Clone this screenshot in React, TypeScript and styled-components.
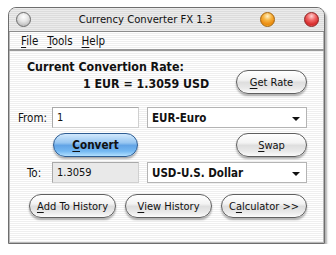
import React from "react";
import styled, { createGlobalStyle } from "styled-components";

const Global = createGlobalStyle`
  html, body { margin: 0; padding: 0; background: #ffffff; }
  body { font-family: "DejaVu Sans Condensed", "DejaVu Sans", sans-serif; }
`;

const FONT = `"DejaVu Sans Condensed", "DejaVu Sans", sans-serif`;

const Window = styled.div`
  box-sizing: border-box;
  margin: 7px 0 0 8px;
  width: 317px;
  height: 237px;
  border: 1px solid #6e6e6e;
  border-radius: 8px 8px 0 0;
  box-shadow: 2px 3px 2px rgba(0, 0, 0, 0.3), inset 1px 0 0 #b8b8b8, inset -1px 0 0 #b8b8b8, inset 0 -1px 0 #b8b8b8;
  display: flex;
  flex-direction: column;
  overflow: hidden;
  background: repeating-linear-gradient(to bottom, #ffffff 0px, #ffffff 1px, #efefef 1px, #efefef 2px);
`;

const TitleBar = styled.div`
  height: 23px;
  border-bottom: 1px solid #8c8c8c;
  background: repeating-linear-gradient(to bottom, #ebebeb 0px, #ebebeb 1px, #dcdcdc 1px, #dcdcdc 2px);
  display: flex;
  align-items: center;
  padding: 0 5px 0 7px;
  font-family: ${FONT};
  font-size: 11.2px;
  color: #111;
`;

const Light = styled.span<{ $kind: "clear" | "amber" | "red" }>`
  width: 15px;
  height: 15px;
  border-radius: 50%;
  box-sizing: border-box;
  flex: none;
  border: 1px solid
    ${(p) => (p.$kind === "clear" ? "#6a6a6a" : p.$kind === "amber" ? "#a4620c" : "#8a2020")};
  background: ${(p) =>
    p.$kind === "clear"
      ? "radial-gradient(circle at 50% 30%, #ffffff 0%, #e6e6e6 40%, #bdbdbd 80%, #d8d8d8 100%)"
      : p.$kind === "amber"
      ? "radial-gradient(circle at 50% 25%, #fff1c8 0%, #f7b542 35%, #ea8a10 70%, #f8d94a 100%)"
      : "radial-gradient(circle at 50% 25%, #ffd2d2 0%, #f26a6a 35%, #d62a2a 70%, #f57b7b 100%)"};
`;

const Title = styled.div`
  flex: 1;
  text-align: center;
`;

const Lights = styled.div`
  display: flex;
  gap: 29px;
`;

const MenuBar = styled.div`
  height: 17px;
  border-bottom: 2px solid #9a9a9a;
  display: flex;
  align-items: center;
  gap: 9px;
  padding: 0 0 0 12px;
  font-family: ${FONT};
  font-size: 11.5px;
  color: #111;
`;

const U = styled.span`
  text-decoration: underline;
  text-underline-offset: 2px;
`;

const Content = styled.div`
  flex: 1;
  padding: 8px 17px 0 0;
  display: flex;
  flex-direction: column;
  font-family: ${FONT};
  color: #111;
`;

const Header = styled.div`
  display: flex;
  justify-content: space-between;
  align-items: flex-start;
  padding-left: 18px;
`;

const RateText = styled.div`
  font-weight: bold;
  font-size: 12.3px;
  line-height: 17px;
`;

const RateValue = styled.div`
  padding-left: 56px;
`;

const Form = styled.div`
  display: grid;
  grid-template-columns: 35px 87px 160px;
  column-gap: 8px;
  grid-template-rows: 21px 24px 21px;
  row-gap: 5px;
  margin-top: 13px;
  font-size: 11.5px;
`;

const Label = styled.div<{ $indent: number }>`
  padding-left: ${(p) => p.$indent}px;
  display: flex;
  align-items: center;
`;

const Input = styled.div<{ $disabled?: boolean }>`
  box-sizing: border-box;
  border: 1px solid #a9a9a9;
  border-right-color: #d0d0d0;
  border-bottom-color: #d0d0d0;
  background: ${(p) => (p.$disabled ? "#e9e9e9" : "#ffffff")};
  display: flex;
  align-items: center;
  padding-left: 4px;
  font-size: 11px;
`;

const Select = styled.div`
  box-sizing: border-box;
  border: 1px solid #b4b4b4;
  background: #ffffff;
  display: flex;
  align-items: center;
  justify-content: space-between;
  padding: 0 6px 0 4px;
  font-weight: bold;
  font-size: 11.5px;
`;

const Arrow = styled.span`
  width: 0;
  height: 0;
  border-left: 4px solid transparent;
  border-right: 4px solid transparent;
  border-top: 4px solid #111;
  margin-top: 2px;
`;

const AquaButton = styled.div<{ $blue?: boolean; $w: number }>`
  box-sizing: border-box;
  width: ${(p) => p.$w}px;
  height: 24px;
  border-radius: 12px;
  border: 1px solid ${(p) => (p.$blue ? "#2e5d93" : "#5f5f5f")};
  background: ${(p) =>
    p.$blue
      ? "linear-gradient(to bottom, #d2e9fd 0%, #97c6f1 40%, #62a4e6 52%, #74b8f2 78%, #b2e0ff 100%)"
      : "linear-gradient(to bottom, #ffffff 0%, #f3f3f3 40%, #dedede 52%, #e9e9e9 78%, #fbfbfb 100%)"};
  box-shadow: 0 2px 2px rgba(0, 0, 0, 0.3);
  display: flex;
  align-items: center;
  justify-content: center;
  font-size: ${(p) => (p.$blue ? "11.6px" : "11px")};
  font-weight: ${(p) => (p.$blue ? "bold" : "normal")};
  color: #111;
`;

const ButtonCell = styled.div<{ $end?: boolean }>`
  display: flex;
  justify-content: ${(p) => (p.$end ? "flex-end" : "center")};
`;

const BottomRow = styled.div`
  display: flex;
  gap: 9px;
  margin: 11px 0 0 20px;
`;

const HeaderButton = styled.div`
  margin-top: 11px;
`;

export default function App() {
  return (
    <>
      <Global />
      <Window>
        <TitleBar>
          <Light $kind="clear" />
          <Title>Currency Converter FX 1.3</Title>
          <Lights>
            <Light $kind="amber" />
            <Light $kind="red" />
          </Lights>
        </TitleBar>
        <MenuBar>
          <span>
            <U>F</U>ile
          </span>
          <span>
            <U>T</U>ools
          </span>
          <span>
            <U>H</U>elp
          </span>
        </MenuBar>
        <Content>
          <Header>
            <RateText>
              <div>Current Convertion Rate:</div>
              <RateValue>1 EUR = 1.3059 USD</RateValue>
            </RateText>
            <HeaderButton>
              <AquaButton $w={71}>
                <U>G</U>et Rate
              </AquaButton>
            </HeaderButton>
          </Header>
          <Form>
            <Label $indent={9}>From:</Label>
            <Input>1</Input>
            <Select>
              <span>EUR-Euro</span>
              <Arrow />
            </Select>

            <div />
            <ButtonCell>
              <AquaButton $blue $w={85}>
                <U>C</U>onvert
              </AquaButton>
            </ButtonCell>
            <ButtonCell $end>
              <AquaButton $w={71}>
                <U>S</U>wap
              </AquaButton>
            </ButtonCell>

            <Label $indent={18}>To:</Label>
            <Input $disabled>1.3059</Input>
            <Select>
              <span>USD-U.S. Dollar</span>
              <Arrow />
            </Select>
          </Form>
          <BottomRow>
            <AquaButton $w={87}>
              <U>A</U>dd To History
            </AquaButton>
            <AquaButton $w={87}>
              <U>V</U>iew History
            </AquaButton>
            <AquaButton $w={86}>
              C<U>a</U>lculator &gt;&gt;
            </AquaButton>
          </BottomRow>
        </Content>
      </Window>
    </>
  );
}
